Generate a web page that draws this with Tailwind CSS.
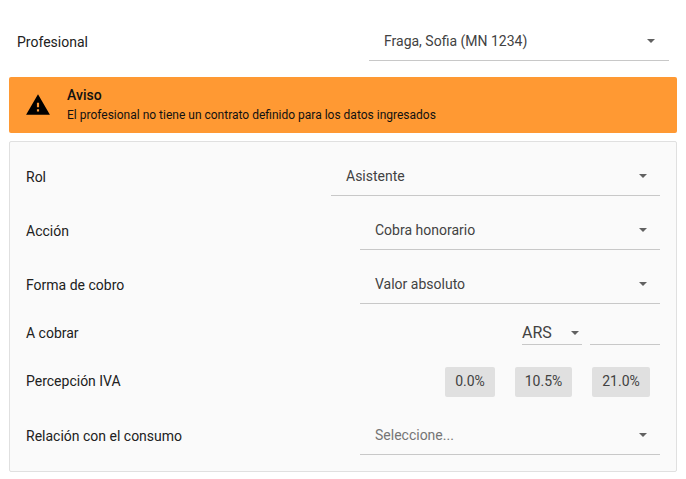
<!DOCTYPE html>
<html lang="es">
<head>
  <meta charset="UTF-8" />
  <meta name="viewport" content="width=device-width, initial-scale=1.0" />
  <title>Profesional</title>
  <script src="https://cdn.jsdelivr.net/npm/@tailwindcss/browser@4"></script>
</head>
<body class="bg-white font-['Roboto',sans-serif] text-[14px] text-[#212121] overflow-hidden">
  <div class="w-[686px] h-[479px] pl-[9px] pr-[9px]">

    <!-- Profesional -->
    <div class="flex justify-between h-[61px] pl-[8px] pr-[8px] pt-[21px]">
      <span class="leading-[42px]">Profesional</span>
      <div class="w-[300px] h-[40px] border-b border-[#c8c8c8] flex items-center justify-between pl-[15px] pr-[14px] pt-[1px] text-[#424242]">
        <span>Fraga, Sofia (MN 1234)</span>
        <svg class="w-[8px] h-[4px]" viewBox="0 0 8 4"><path d="M0 0h8L4 4z" fill="#616161"/></svg>
      </div>
    </div>

    <!-- Aviso -->
    <div class="mt-[16px] h-[56px] bg-[#ff9933] rounded-[2px] flex items-center text-[#111]">
      <svg class="ml-[16px] w-[26px] h-[26px] shrink-0" viewBox="0 0 24 24"><path d="M1 21h22L12 2 1 21zm12-3h-2v-2h2v2zm0-4h-2v-4h2v4z" fill="#000"/></svg>
      <div class="ml-[16px]">
        <div class="text-[14px] leading-[16px] font-medium">Aviso</div>
        <div class="text-[12px] leading-[18px] mt-[3px]">El profesional no tiene un contrato definido para los datos ingresados</div>
      </div>
    </div>

    <!-- Panel -->
    <div class="mt-[8px] h-[331px] bg-[#fafafa] border border-[#e0e0e0] rounded-[2px] pl-[16px] pr-[16px]">
      <div class="flex justify-between items-end h-[54px]">
        <span class="pb-[8px]">Rol</span>
        <div class="w-[329px] h-[40px] border-b border-[#c8c8c8] flex items-center justify-between pl-[15px] pr-[13px] pt-[1px] text-[#424242]">
          <span>Asistente</span>
          <svg class="w-[8px] h-[4px]" viewBox="0 0 8 4"><path d="M0 0h8L4 4z" fill="#616161"/></svg>
        </div>
      </div>
      <div class="flex justify-between items-end h-[54px]">
        <span class="pb-[8px]">Acción</span>
        <div class="w-[300px] h-[40px] border-b border-[#c8c8c8] flex items-center justify-between pl-[15px] pr-[13px] pt-[1px] text-[#424242]">
          <span>Cobra honorario</span>
          <svg class="w-[8px] h-[4px]" viewBox="0 0 8 4"><path d="M0 0h8L4 4z" fill="#616161"/></svg>
        </div>
      </div>
      <div class="flex justify-between items-end h-[54px]">
        <span class="pb-[8px]">Forma de cobro</span>
        <div class="w-[300px] h-[40px] border-b border-[#c8c8c8] flex items-center justify-between pl-[15px] pr-[13px] pt-[1px] text-[#424242]">
          <span>Valor absoluto</span>
          <svg class="w-[8px] h-[4px]" viewBox="0 0 8 4"><path d="M0 0h8L4 4z" fill="#616161"/></svg>
        </div>
      </div>
      <div class="flex justify-between items-end h-[41px]">
        <span class="pb-[1px]">A cobrar</span>
        <div class="flex gap-[8px]">
          <div class="w-[60px] h-[24px] border-b border-[#c8c8c8] flex items-center justify-between pr-[3px] text-[16px] text-[#424242]">
            <span>ARS</span>
            <svg class="w-[8px] h-[4px]" viewBox="0 0 8 4"><path d="M0 0h8L4 4z" fill="#616161"/></svg>
          </div>
          <div class="w-[70px] h-[24px] border-b border-[#c8c8c8]"></div>
        </div>
      </div>
      <div class="flex justify-between items-center h-[52px] pt-[21px] pr-[10px]">
        <span>Percepción IVA</span>
        <div class="flex gap-[20px] text-[#424242]">
          <div class="w-[50px] h-[30px] bg-[#e0e0e0] rounded-[2px] flex items-center justify-center">0.0%</div>
          <div class="w-[57px] h-[30px] bg-[#e0e0e0] rounded-[2px] flex items-center justify-center">10.5%</div>
          <div class="w-[58px] h-[30px] bg-[#e0e0e0] rounded-[2px] flex items-center justify-center">21.0%</div>
        </div>
      </div>
      <div class="flex justify-between items-end h-[58px]">
        <span class="pb-[8px]">Relación con el consumo</span>
        <div class="w-[300px] h-[40px] border-b border-[#c8c8c8] flex items-center justify-between pl-[15px] pr-[13px] pt-[1px] text-[#757575]">
          <span>Seleccione...</span>
          <svg class="w-[8px] h-[4px]" viewBox="0 0 8 4"><path d="M0 0h8L4 4z" fill="#616161"/></svg>
        </div>
      </div>
    </div>

  </div>
</body>
</html>
